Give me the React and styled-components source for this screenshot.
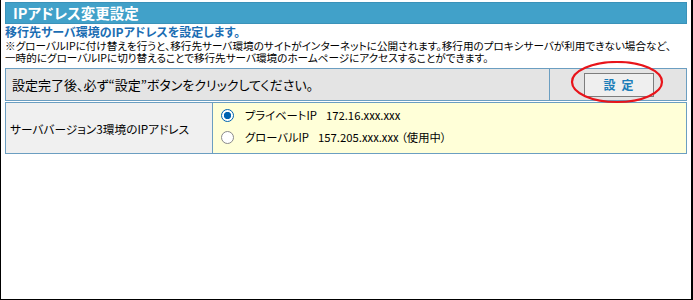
import React from 'react';
import styled, { createGlobalStyle } from 'styled-components';

const GlobalStyle = createGlobalStyle`
  * {
    box-sizing: border-box;
  }

  body {
    margin: 0;
    background: #fff;
  }
`;

const Frame = styled.div`
  width: 693px;
  height: 300px;
  padding: 2px 4px 0 4px;
  border-left: 1px solid #000;
  border-right: 2px solid #000;
  border-bottom: 1px solid #000;
  font-family: "Noto Sans CJK JP", "Liberation Sans", sans-serif;
  font-feature-settings: "palt";
  color: #000;
`;

const TitleBar = styled.h1`
  margin: 0;
  height: 22px;
  padding-left: 7px;
  background: #41a1c9;
  border: 1px solid #3a92b9;
  color: #fff;
  font-size: 14.5px;
  font-weight: bold;
  line-height: 20px;
`;

const Lead = styled.p`
  margin: 0;
  color: #1b6db3;
  font-size: 12px;
  font-weight: bold;
  line-height: 16px;
`;

const Note = styled.p`
  margin: 0;
  font-size: 10.6px;
  line-height: 12px;
  white-space: nowrap;
`;

const Table = styled.div`
  display: grid;
  grid-template-columns: ${(p) => p.$cols};
  margin-top: ${(p) => p.$gap}px;
  height: ${(p) => p.$height}px;
  border: 1px solid #6b9ec1;
  background: ${(p) => p.$bg || 'transparent'};
`;

const Cell = styled.div`
  position: relative;
  display: flex;
  align-items: center;
  justify-content: ${(p) => (p.$center ? 'center' : 'flex-start')};
  padding-left: ${(p) => p.$pad || 0}px;
  background: ${(p) => p.$bg || 'transparent'};
  border-right: ${(p) => (p.$divider ? '1px solid #6b9ec1' : 'none')};
  font-size: ${(p) => p.$size || 12}px;
  white-space: nowrap;
`;

const Button = styled.button`
  width: 70px;
  height: 24px;
  padding: 0;
  margin-left: 1px;
  background: #efefef;
  border: 1px solid #7d7d7d;
  color: #1a7cb8;
  font-family: inherit;
  font-size: 12px;
  font-weight: bold;
  letter-spacing: 6px;
  text-indent: 6px;
`;

const Circle = styled.svg`
  position: absolute;
  left: 20px;
  top: -8px;
  pointer-events: none;
`;

const Options = styled.div`
  display: flex;
  flex-direction: column;
  align-self: stretch;
  padding: 1px 0 0 8px;
  background: #ffffd8;
`;

const Option = styled.label`
  display: flex;
  align-items: center;
  height: 22px;
  font-size: 11.3px;
  white-space: nowrap;
`;

const Radio = styled.span`
  width: 13px;
  height: 13px;
  margin-right: 11px;
  border-radius: 50%;
  border: 1px solid ${(p) => (p.$on ? '#0063b1' : '#8a8a8a')};
  background: ${(p) =>
    p.$on ? 'radial-gradient(circle, #0063b1 0 3.4px, #fff 3.9px)' : '#fff'};
`;

const Addr = styled.span`
  margin-left: 9px;
`;

const options = [
  { label: 'プライベートIP', addr: '172.16.xxx.xxx', on: true },
  { label: 'グローバルIP', addr: '157.205.xxx.xxx （使用中）', on: false },
];

const App = () => (
  <>
    <GlobalStyle />
    <Frame>
      <TitleBar>IPアドレス変更設定</TitleBar>
      <Lead>移行先サーバ環境のIPアドレスを設定します。</Lead>
      <Note>
        ※グローバルIPに付け替えを行うと、移行先サーバ環境のサイトがインターネットに公開されます。移行用のプロキシサーバが利用できない場合など、
      </Note>
      <Note>一時的にグローバルIPに切り替えることで移行先サーバ環境のホームページにアクセスすることができます。</Note>

      <Table $cols="1fr 136px" $gap={4} $height={33} $bg="#e4e4e4">
        <Cell $pad={6} $size={13} $divider>
          設定完了後、必ず“設定”ボタンをクリックしてください。
        </Cell>
        <Cell $center>
          <Button>設定</Button>
          <Circle width="94" height="44" viewBox="0 0 94 44">
            <ellipse cx="47" cy="21" rx="45" ry="20" fill="none" stroke="#e8141a" strokeWidth="2.2" />
          </Circle>
        </Cell>
      </Table>

      <Table $cols="207px 1fr" $gap={1} $height={52}>
        <Cell $pad={4} $size={11.7} $bg="#f0f0f0" $divider>
          サーババージョン3環境のIPアドレス
        </Cell>
        <Options>
          {options.map((o) => (
            <Option key={o.label}>
              <Radio $on={o.on} />
              {o.label}
              <Addr>{o.addr}</Addr>
            </Option>
          ))}
        </Options>
      </Table>
    </Frame>
  </>
);

export default App;
